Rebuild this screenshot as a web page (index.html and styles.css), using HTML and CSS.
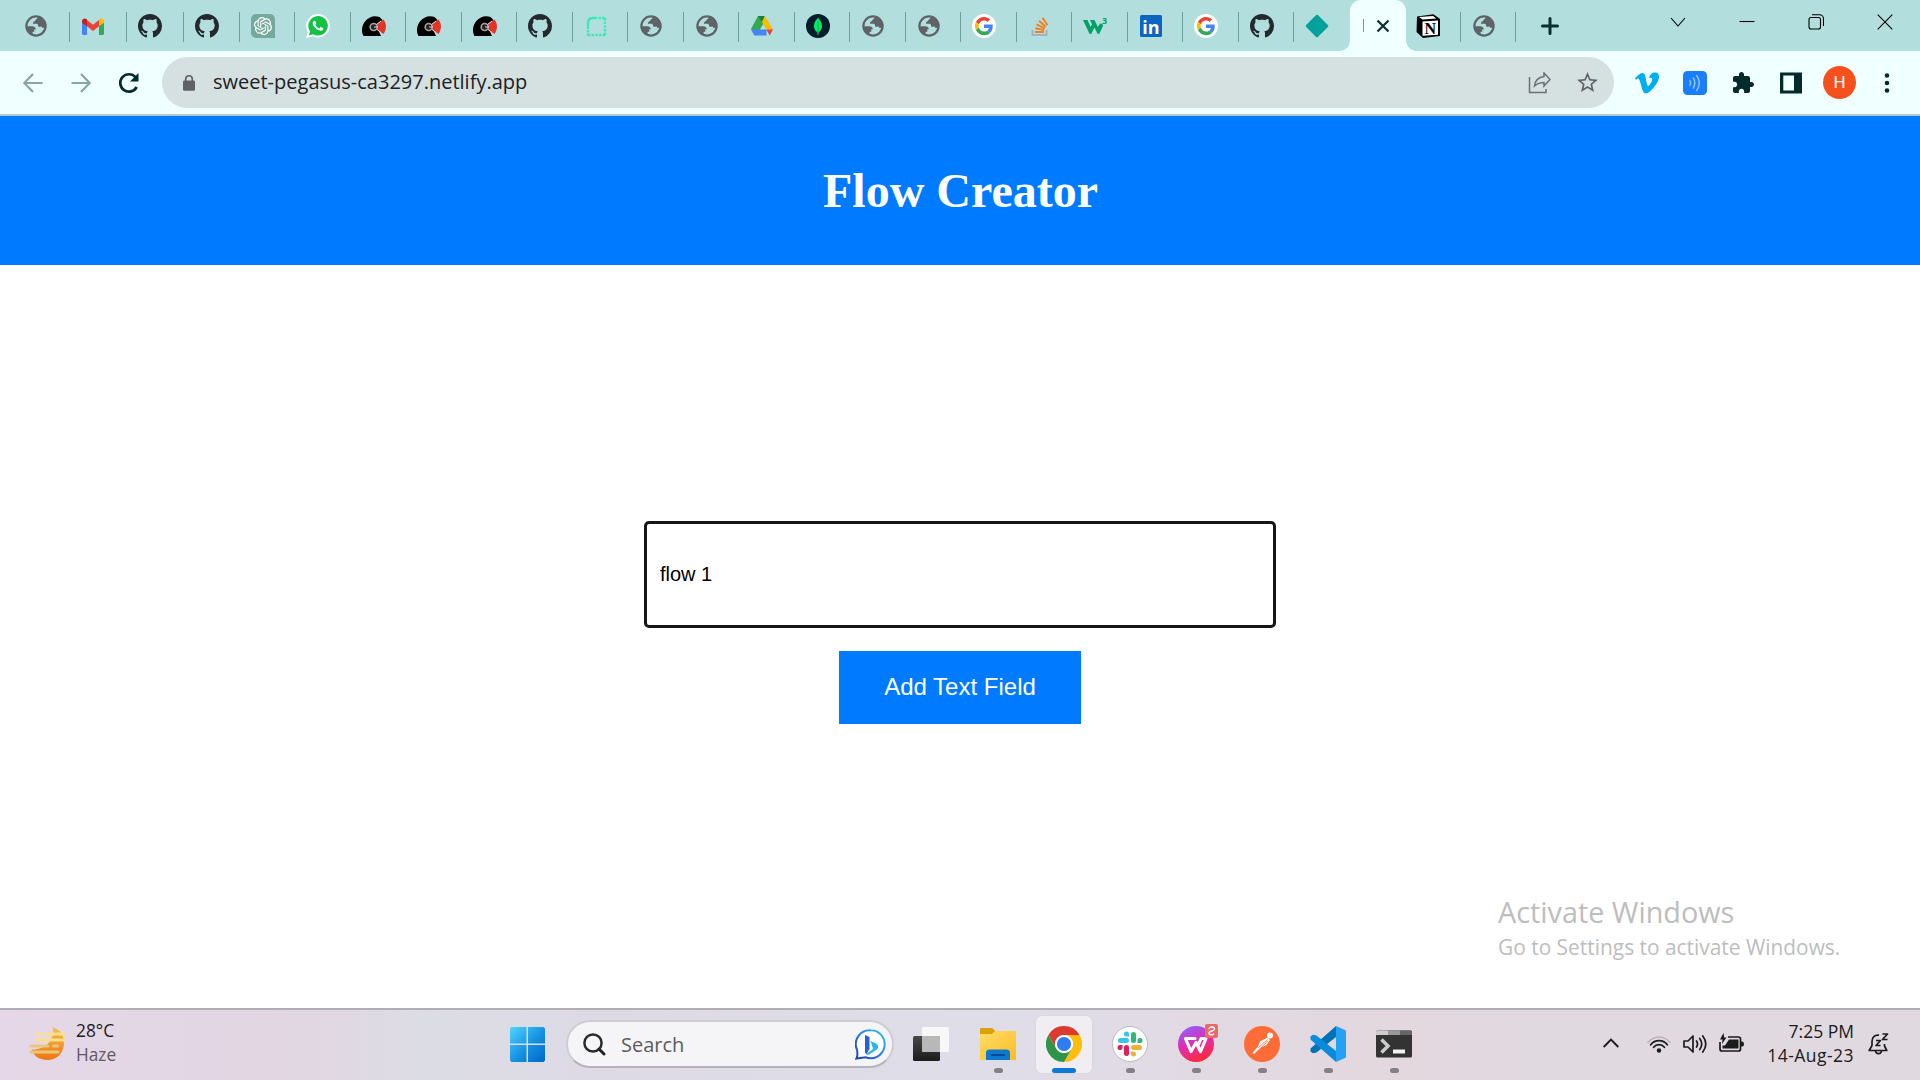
FILE: index.html
```html
<!DOCTYPE html>
<html lang="en">
<head>
<meta charset="utf-8">
<title>Flow Creator</title>
<link rel="stylesheet" href="styles.css">
</head>
<body>
<svg class="defs" aria-hidden="true">
  <defs>
    <linearGradient id="gWin" x1="0" y1="0" x2="1" y2="1"><stop offset="0" stop-color="#4fd5ff"/><stop offset=".55" stop-color="#1590e0"/><stop offset="1" stop-color="#0068c8"/></linearGradient>
    <linearGradient id="gMoon" x1="0" y1="0" x2="0" y2="1"><stop offset="0" stop-color="#f5bf52"/><stop offset="1" stop-color="#ee7512"/></linearGradient>
    <linearGradient id="gBing" x1="0" y1="1" x2="1" y2="0"><stop offset="0" stop-color="#1b3fae"/><stop offset=".5" stop-color="#2c7ee8"/><stop offset="1" stop-color="#2bc9ee"/></linearGradient>
    <linearGradient id="gFolder" x1="0" y1="0" x2="1" y2="1"><stop offset="0" stop-color="#ffdc6b"/><stop offset="1" stop-color="#fcbd22"/></linearGradient>
    <linearGradient id="gWps" x1=".2" y1="0" x2=".6" y2="1"><stop offset="0" stop-color="#8b62ff"/><stop offset=".5" stop-color="#e22bb0"/><stop offset="1" stop-color="#ff2a35"/></linearGradient>
    <linearGradient id="gDark" x1="0" y1="0" x2="0" y2="1"><stop offset="0" stop-color="#484848"/><stop offset="1" stop-color="#1c1c1c"/></linearGradient>
  </defs>
  <symbol id="globe" viewBox="0 0 24 24"><circle cx="12" cy="12" r="9.6" fill="none" stroke="#5f6368" stroke-width="2.3"/><path fill="#5f6368" d="M13 2.500c1 1 .5 2.200-.8 2.800-1 .5-.5 1.600-1.600 2-1.600.5-1.700 1.400-1.600 2.400h3.400c1.500 0 1.600 1 1.700 2.200.1 1.300 1.900.9 3 .7.700-.1.900.600 1 1.200l3.400.2C23 8 19 3 13 2.500z"/><path fill="#5f6368" d="M2.500 12.200h5.700c2.300.1 3.600 1.300 3.700 3.100h-1.600v2.500H8.800c-.5 1.100-.2 2.300.3 3.600C5 20.200 2.600 16.500 2.500 12.200z"/></symbol>
  <symbol id="github" viewBox="0 0 16 16"><path fill="#24292f" d="M8 0C3.58 0 0 3.58 0 8c0 3.54 2.29 6.53 5.47 7.59.4.07.55-.17.55-.38 0-.19-.01-.82-.01-1.49-2.01.37-2.53-.49-2.69-.94-.09-.23-.48-.94-.82-1.13-.28-.15-.68-.52-.01-.53.63-.01 1.08.58 1.23.82.72 1.21 1.87.87 2.33.66.07-.52.28-.87.51-1.07-1.78-.2-3.64-.89-3.64-3.95 0-.87.31-1.59.82-2.15-.08-.2-.36-1.02.08-2.12 0 0 .67-.21 2.2.82.64-.18 1.32-.27 2-.27s1.36.09 2 .27c1.53-1.04 2.2-.82 2.2-.82.44 1.1.16 1.92.08 2.12.51.56.82 1.27.82 2.15 0 3.07-1.87 3.75-3.65 3.95.29.25.54.73.54 1.48 0 1.07-.01 1.93-.01 2.2 0 .21.15.46.55.38A8.01 8.01 0 0 0 16 8c0-4.42-3.58-8-8-8z"/></symbol>
  <symbol id="helmet" viewBox="0 0 24 24"><path d="M1.500 22C-1.500 17 .2 11 3 7.500 6.500 3 12 1 17.500 3l3 3L14 11l5 11z"/><path fill="#e53427" d="M14 11L21.500 5.500c3.300 4.500 3.300 9.500 0 14.500l-7.500-5z"/><circle cx="11.700" cy="13" r="3.500" fill="#222" stroke="#a5a2a2" stroke-width="1.600"/><path stroke="#ddd" stroke-width="1" fill="none" d="M12 13h4M14.500 10.500L19 7M15 15.500l4 3"/></symbol>
  <symbol id="google" viewBox="0 0 24 24"><circle cx="12" cy="12" r="12" fill="#fff"/><g transform="translate(2.900 2.900) scale(.38)"><path fill="#EA4335" d="M24 9.500c3.540 0 6.710 1.220 9.210 3.600l6.850-6.850C35.900 2.380 30.470 0 24 0 14.620 0 6.510 5.380 2.560 13.220l7.980 6.190C12.430 13.720 17.740 9.500 24 9.500z"/><path fill="#4285F4" d="M46.980 24.550c0-1.570-.15-3.090-.38-4.550H24v9.020h12.940c-.58 2.960-2.260 5.480-4.780 7.180l7.730 6c4.510-4.180 7.090-10.360 7.090-17.650z"/><path fill="#FBBC05" d="M10.530 28.590c-.48-1.450-.76-2.990-.76-4.590s.27-3.140.76-4.590l-7.980-6.190C.92 16.460 0 20.120 0 24c0 3.880.92 7.540 2.560 10.780l7.970-6.190z"/><path fill="#34A853" d="M24 48c6.480 0 11.930-2.130 15.890-5.810l-7.730-6c-2.150 1.450-4.920 2.300-8.160 2.300-6.260 0-11.570-4.220-13.470-9.910l-7.980 6.190C6.510 42.620 14.620 48 24 48z"/></g></symbol>
</svg>

<header class="tabstrip">
  <div class="tab tab-first"><svg class="fav"><use href="#globe"/></svg></div>
  <div class="tab tab-wide"><svg class="fav" viewBox="0 0 24 24"><path fill="#4285f4" d="M1 7v12.500c0 .8.600 1.400 1.400 1.400H6V10z"/><path fill="#34a853" d="M23 7v12.500c0 .8-.6 1.400-1.400 1.400H18V10z"/><path fill="#ea4335" d="M6 6l6 4.700L18 6v6.200l-6 4.700-6-4.700z"/><path fill="#c5221f" d="M1 7.200C1 4.500 4 3.700 6 5.300v6.900L1 8.700z"/><path fill="#fbbc04" d="M23 7.200c0-2.700-3-3.500-5-1.900v6.900l5-3.500z"/></svg></div>
  <div class="tab tab-wide"><svg class="fav"><use href="#github"/></svg></div>
  <div class="tab"><svg class="fav"><use href="#github"/></svg></div>
  <div class="tab"><svg class="fav" viewBox="0 0 24 24"><path fill="#74aa9c" d="M5 0h14a5 5 0 0 1 5 5v19H5a5 5 0 0 1-5-5V5a5 5 0 0 1 5-5z"/><path transform="translate(3 3) scale(.75)" fill="#fff" d="M22.2819 9.8211a5.9847 5.9847 0 0 0-.5157-4.9108 6.0462 6.0462 0 0 0-6.5098-2.9A6.0651 6.0651 0 0 0 4.9807 4.1818a5.9847 5.9847 0 0 0-3.9977 2.9 6.0462 6.0462 0 0 0 .7427 7.0966 5.98 5.98 0 0 0 .511 4.9107 6.051 6.051 0 0 0 6.5146 2.9001A5.9847 5.9847 0 0 0 13.2599 24a6.0557 6.0557 0 0 0 5.7718-4.2058 5.9894 5.9894 0 0 0 3.9977-2.9001 6.0557 6.0557 0 0 0-.7475-7.0729zm-9.022 12.6081a4.4755 4.4755 0 0 1-2.8764-1.0408l.1419-.0804 4.7783-2.7582a.7948.7948 0 0 0 .3927-.6813v-6.7369l2.02 1.1686a.071.071 0 0 1 .038.052v5.5826a4.504 4.504 0 0 1-4.4945 4.4944zm-9.6607-4.1254a4.4708 4.4708 0 0 1-.5346-3.0137l.142.0852 4.783 2.7582a.7712.7712 0 0 0 .7806 0l5.8428-3.3685v2.3324a.0804.0804 0 0 1-.0332.0615L9.74 19.9502a4.4992 4.4992 0 0 1-6.1408-1.6464zM2.3408 7.8956a4.485 4.485 0 0 1 2.3655-1.9728V11.6a.7664.7664 0 0 0 .3879.6765l5.8144 3.3543-2.0201 1.1685a.0757.0757 0 0 1-.071 0l-4.8303-2.7865A4.504 4.504 0 0 1 2.3408 7.872zm16.5963 3.8558L13.1038 8.364 15.1192 7.2a.0757.0757 0 0 1 .071 0l4.8303 2.7913a4.4944 4.4944 0 0 1-.6765 8.1042v-5.6772a.79.79 0 0 0-.407-.667zm2.0107-3.0231l-.142-.0852-4.7735-2.7818a.7759.7759 0 0 0-.7854 0L9.409 9.2297V6.8974a.0662.0662 0 0 1 .0284-.0615l4.8303-2.7866a4.4992 4.4992 0 0 1 6.6802 4.66zM8.3065 12.863l-2.02-1.1638a.0804.0804 0 0 1-.038-.0567V6.0742a4.4992 4.4992 0 0 1 7.3757-3.4537l-.142.0805L8.704 5.459a.7948.7948 0 0 0-.3927.6813zm1.0976-2.3654l2.602-1.4998 2.6069 1.4998v2.9994l-2.5974 1.4997-2.6067-1.4997Z"/></svg></div>
  <div class="tab"><svg class="fav" viewBox="0 0 24 24"><path fill="#fff" d="M12 0a12 11.800 0 1 1-5.600 22.300L.2 24l1.700-6A11.900 11.900 0 0 1 12 0z"/><path fill="#12c245" d="M12 2a9.900 9.800 0 1 1-5 18.300L2.900 21.400 4 17.300A9.900 9.900 0 0 1 12 2z"/><path transform="translate(1.400 1.200) scale(.88)" fill="#fff" d="M17.472 14.382c-.297-.149-1.758-.867-2.03-.967-.273-.099-.471-.148-.67.15-.197.297-.767.966-.94 1.164-.173.199-.347.223-.644.075-.297-.15-1.255-.463-2.39-1.475-.883-.788-1.48-1.761-1.653-2.059-.173-.297-.018-.458.13-.606.134-.133.298-.347.446-.52.149-.174.198-.298.298-.497.099-.198.05-.371-.025-.52-.075-.149-.669-1.612-.916-2.207-.242-.579-.487-.5-.669-.51-.173-.008-.371-.01-.57-.01-.198 0-.52.074-.792.372-.272.297-1.040 1.016-1.040 2.479 0 1.462 1.065 2.875 1.213 3.074.149.198 2.096 3.200 5.077 4.487.709.306 1.262.489 1.694.625.712.227 1.360.195 1.871.118.571-.085 1.758-.719 2.006-1.413.248-.694.248-1.289.173-1.413-.074-.124-.272-.198-.57-.347z"/></svg></div>
  <div class="tab"><svg class="fav"><use href="#helmet"/></svg></div>
  <div class="tab"><svg class="fav"><use href="#helmet"/></svg></div>
  <div class="tab"><svg class="fav"><use href="#helmet"/></svg></div>
  <div class="tab"><svg class="fav"><use href="#github"/></svg></div>
  <div class="tab"><svg class="fav" viewBox="0 0 24 24"><g fill="none" stroke="#3be8b8" stroke-width="2.300"><path d="M4 15V9c0-3 2-5 5-5h4"/><path stroke-dasharray="2.400 1.300" d="M14.500 4H22M21 4v18M21 21H3M4 22v-7"/></g></svg></div>
  <div class="tab"><svg class="fav"><use href="#globe"/></svg></div>
  <div class="tab"><svg class="fav"><use href="#globe"/></svg></div>
  <div class="tab"><svg class="fav" viewBox="0 0 24 24"><path fill="#34a853" d="M8 2h5l2.500 4L6.500 21.500 1 15z"/><path fill="#188038" d="M8 2h7l-3.300 5.700z"/><path fill="#fbbc04" d="M12 7.700L15 2l8 13.500h-6.800z"/><path fill="#4285f4" d="M1 15.500h15.500v6H4.300z"/><path fill="#ea4335" d="M16.300 15.500H23l-3.300 6z"/></svg></div>
  <div class="tab"><svg class="fav" viewBox="0 0 24 24"><circle cx="12" cy="12" r="12" fill="#001e2b"/><path fill="#00ed64" d="M12 3.500c.8 1.800 4 4 4 8.500 0 3-1.500 5-3.500 6.600L12.300 21h-.7l-.2-2.400C9.500 17 8 15 8 12c0-4.500 3.200-6.700 4-8.500z"/><path stroke="#00a84c" d="M12 7v13"/></svg></div>
  <div class="tab"><svg class="fav"><use href="#globe"/></svg></div>
  <div class="tab"><svg class="fav"><use href="#globe"/></svg></div>
  <div class="tab"><svg class="fav"><use href="#google"/></svg></div>
  <div class="tab"><svg class="fav" viewBox="0 0 24 24"><path fill="none" stroke="#a9b2b4" stroke-width="2" d="M4.500 16v5h14v-5"/><g stroke="#f48024" stroke-width="2"><path d="M7 18h9M7.200 14.300l9 1.600M8.500 10.400l8.300 3.900M11 6.800l6.700 6M14.500 3.800l5 7.500"/></g></svg></div>
  <div class="tab"><svg class="fav" viewBox="0 0 24 24"><path fill="#04a068" d="M0 6h4.500l3.200 7L9 10.300 7 6h4.500l3.300 7L17 9.500l2.500.5L20 12l-3.800 8-1.700-.3-3-6.200L8.200 20H6.600z"/><text x="21.500" y="10" class="fav-three">3</text></svg></div>
  <div class="tab"><svg class="fav" viewBox="0 0 24 24"><rect x="1" y="1" width="22" height="22" rx="1.500" fill="#0a66c2"/><text x="12" y="19.500" class="fav-in">in</text></svg></div>
  <div class="tab"><svg class="fav"><use href="#google"/></svg></div>
  <div class="tab"><svg class="fav"><use href="#github"/></svg></div>
  <div class="tab tab-plain"><svg class="fav" viewBox="0 0 24 24"><path fill="#05a19c" stroke="#05a19c" stroke-width="2.500" stroke-linejoin="round" d="M12 2l10 10-10 10L2 12z"/></svg></div>
  <div class="tab tab-active"><i class="title-sliver"></i><svg width="14" height="14" viewBox="0 0 14 14"><path stroke="#08302f" stroke-width="2.200" d="M1.500 1.500l11 11M12.500 1.500l-11 11"/></svg></div>
  <div class="tab"><svg class="fav" viewBox="0 0 24 24"><path d="M1 2.500L17.500.3 24 5v17l-17 2L.5 18z"/><path fill="#fff" d="M3 3l14-1 3.500 2.500L6.500 5.500zM6.500 7.500L22 6.500v14.300l-15.500 1z"/><text x="14.300" y="19.500" class="fav-n">N</text></svg></div>
  <div class="tab"><svg class="fav"><use href="#globe"/></svg></div>
  <svg class="new-tab" viewBox="0 0 18 18"><path stroke="#08302f" stroke-width="3" stroke-linecap="round" d="M9 1.500v15M1.500 9h15"/></svg>
  <div class="window-controls">
    <svg viewBox="0 0 16 16"><path d="M1 4l7 8 7-8"/></svg>
    <svg viewBox="0 0 16 16"><path d="M.5 7.500h15"/></svg>
    <svg viewBox="0 0 16 16"><rect x="1" y="3.500" width="11.500" height="11.500" rx="2"/><path d="M4 .8h7.500a4 4 0 0 1 4 4V12"/></svg>
    <svg viewBox="0 0 16 16"><path d="M.7.7l14.600 14.600M15.300.7L.7 15.300"/></svg>
  </div>
</header>

<nav class="toolbar">
  <svg class="nav-icon nav-off" viewBox="0 0 20 20"><path d="M19.500 10H1.500M10 1L1.300 10l8.700 9"/></svg>
  <svg class="nav-icon nav-off" viewBox="0 0 20 20"><path d="M.5 10h18M10 1l8.700 9-8.700 9"/></svg>
  <svg class="nav-icon reload" viewBox="0 0 22 22"><path d="M18.700 15A8.700 8.700 0 1 1 17.500 5.200"/><path class="solid" d="M20.500 1v8.500H12z"/></svg>
  <div class="omnibox">
    <svg class="lock" viewBox="0 0 12 16"><rect y="5.500" width="12" height="10.300" rx="1.300" fill="#5f6368"/><path fill="none" stroke="#5f6368" stroke-width="1.700" d="M2.700 6V4a3.300 3.300 0 0 1 6.600 0v2"/></svg>
    <span class="url">sweet-pegasus-ca3297.netlify.app</span>
    <svg class="share" viewBox="0 0 24 22"><path d="M1.500 5v15.500H18V17"/><path d="M16 1l6 6.500-6 6.500v-3.500c-4 0-6.500.8-9.500 3.500.7-5.500 4-8.700 9.500-9.400z"/></svg>
    <svg class="star" viewBox="0 0 24 24"><path fill="#5f6368" d="M22 9.240l-7.190-.62L12 2 9.190 8.630 2 9.240l5.460 4.730L5.820 21 12 17.270 18.180 21l-1.630-7.030L22 9.240zM12 15.400l-3.760 2.270 1-4.280-3.320-2.880 4.380-.38L12 6.100l1.710 4.040 4.380.38-3.320 2.880 1 4.280L12 15.400z"/></svg>
  </div>
  <div class="extensions">
    <svg viewBox="0 0 24 24"><path fill="#00adef" d="M23.9765 6.4168c-.105 2.338-1.739 5.5429-4.894 9.6088-3.2679 4.247-6.0258 6.3699-8.2898 6.3699-1.409 0-2.578-1.294-3.553-3.881l-1.9179-7.1138c-.719-2.584-1.488-3.878-2.312-3.878-.179 0-.806.378-1.8809 1.132l-1.129-1.457a315.060 315.060 0 003.501-3.1279c1.579-1.368 2.765-2.085 3.5539-2.159 1.867-.18 3.016 1.100 3.447 3.838.465 2.953.789 4.789.971 5.5069.5389 2.450 1.1309 3.674 1.7759 3.674.502 0 1.256-.796 2.265-2.385 1.004-1.589 1.540-2.797 1.612-3.628.144-1.371-.395-2.061-1.614-2.061-.574 0-1.167.121-1.777.391 1.186-3.8679 3.434-5.7568 6.7619-5.6368 2.4729.06 3.6279 1.664 3.4929 4.7969z"/></svg>
    <svg viewBox="0 0 24 24"><rect width="24" height="24" rx="4.500" fill="#1a7cff"/><g fill="none" stroke="#8cc8ff" stroke-width="1.500" stroke-linecap="round"><path d="M7 9.500q1.300 2.500 0 5M10.300 7q3 5 0 10M13.700 4.500q5 7.500 0 15"/></g></svg>
    <svg viewBox="0 0 24 24"><path fill="#042b2b" d="M20.500 11H19V7c0-1.100-.9-2-2-2h-4V3.500C13 2.120 11.880 1 10.500 1S8 2.120 8 3.500V5H4c-1.100 0-1.990.9-1.990 2v3.800H3.500c1.490 0 2.700 1.210 2.700 2.700s-1.210 2.700-2.700 2.700H2V20c0 1.100.9 2 2 2h3.800v-1.500c0-1.490 1.210-2.700 2.700-2.700 1.490 0 2.700 1.210 2.700 2.700V22H17c1.100 0 2-.9 2-2v-4h1.500c1.380 0 2.500-1.120 2.500-2.500S21.880 11 20.500 11z"/></svg>
    <svg viewBox="0 0 24 24"><path fill="#042b2b" fill-rule="evenodd" d="M1 1.500h22v21H1zM4.300 4.500v15H15v-15z"/></svg>
    <span class="avatar">H</span>
    <svg class="kebab" viewBox="0 0 6 20"><g fill="#042b2b"><circle cx="3" cy="2.500" r="2.300"/><circle cx="3" cy="10" r="2.300"/><circle cx="3" cy="17.500" r="2.300"/></g></svg>
  </div>
</nav>

<main class="page">
  <div class="banner"><h1>Flow Creator</h1></div>
  <div class="flow">
    <input class="flow-input" type="text" value="flow 1">
    <button class="flow-add" type="button">Add Text Field</button>
  </div>
  <aside class="watermark"><p class="wm-title">Activate Windows</p><p class="wm-text">Go to Settings to activate Windows.</p></aside>
</main>

<footer class="taskbar">
  <div class="weather">
    <svg width="38" height="34" viewBox="0 0 38 34"><path fill="url(#gMoon)" d="M23.500 0C32 3 36 10 34.800 18.500 33.500 27.500 27 33 18.500 33 11 33 5 29.500 2.500 22.500 16 23 27 13 23.500 0z"/><g stroke-width="3.200" stroke-linecap="round"><path stroke="#fbe183" d="M8 7h4M18 7h17M8 13h27"/><path stroke="#eac778" d="M2 19h17M24.500 19h4M2 25h27"/></g></svg>
    <div class="stack"><span class="temp">28°C</span><span class="muted">Haze</span></div>
  </div>
  <div class="dock">
    <svg class="start" viewBox="0 0 35 35"><path fill="url(#gWin)" d="M1.500 0H16.500v16.500H0V1.500zM18 0h15.500L35 1.500v15H18zM0 18h16.500v17h-15L0 33.500zM18 18h17v15.500L33.500 35H18z"/></svg>
    <div class="search">
      <svg width="23" height="23" viewBox="0 0 23 23"><circle cx="10" cy="10" r="8.600" fill="none" stroke="#2b2b2b" stroke-width="2.500"/><path stroke="#222" stroke-width="3" stroke-linecap="round" d="M16 16l5 5"/></svg>
      <span class="search-label">Search</span>
      <svg class="bing" width="31" height="31" viewBox="0 0 31 31"><path fill="#fff" stroke="url(#gBing)" stroke-width="2" d="M16 1.200a14 14 0 1 1-5.500 27L1.500 29.500c1.500-2.500 1-5 .6-8.500A14 14 0 0 1 16 1.200z"/><path fill="#2362dc" d="M10 6l4.500 2v12L11.500 25c-.9-.3-1.500-1-1.500-2z"/><path fill="#25b9ee" d="M15.500 12l5 2.200c3.500 1.600 3.500 5 .7 6.900l-7 4.500c-1.500.8-2.500.4-3-.7l7-5z"/></svg>
    </div>
    <svg class="task-view" viewBox="0 0 36 36"><rect y="9" width="27" height="25" rx="1.500" fill="url(#gDark)"/><rect x="9" y="0" width="27" height="25" rx="1.500" fill="#f8f8f8"/><path fill="#b8b8b8" d="M9 9h18v16H10.500L9 23.500z"/></svg>
    <div class="app"><svg viewBox="0 0 36 36"><path fill="#dea103" d="M0 3.500C0 2.500.6 2 1.500 2H12l3 2.500V9H0z"/><path fill="url(#gFolder)" d="M0 8h12l3-3h20q1 0 1 1v27q0 1-1 1H1q-1 0-1-1z"/><path fill="#0c78cf" d="M6 34v-7q0-3.500 3.500-3.500h17q3.500 0 3.500 3.500v7z"/><path stroke="#07458d" stroke-width="1.800" d="M11 29h14"/></svg></div>
    <div class="app app-on"><svg viewBox="0 0 36 36"><path fill="#db3b2e" d="M18 0a18 18 0 0 1 15.600 9H18a9 9 0 0 0-7.800 13.500L2.400 9A18 18 0 0 1 18 0z"/><path fill="#fdbd0d" d="M33.600 9A18 18 0 0 1 18 36l7.800-13.500A9 9 0 0 0 18 9z"/><path fill="#2f9448" d="M18 36A18 18 0 0 1 2.400 9l7.800 13.500A9 9 0 0 0 25.800 22.500z"/><circle cx="18" cy="18" r="9" fill="#fff"/><circle cx="18" cy="18" r="7.100" fill="#2e7cf0"/></svg></div>
    <div class="app"><svg viewBox="0 0 36 36"><circle cx="18" cy="18" r="17.500" fill="#fff" stroke="#bdb9c1"/><g stroke-width="5" stroke-linecap="round"><path stroke="#36c5f0" d="M8.500 14.500h6"/><path stroke="#2eb67d" d="M21.500 8.500v6"/><path stroke="#ecb22e" d="M21.500 21.500h6"/><path stroke="#e01e5a" d="M14.500 21.500v6"/></g><path fill="#36c5f0" d="M17 10.500h-2.500a2.500 2.500 0 1 1 2.500-2.500z"/><path fill="#2eb67d" d="M25.500 17v-2.500a2.500 2.500 0 1 1 2.500 2.500z"/><path fill="#ecb22e" d="M19 25.500h2.500a2.500 2.500 0 1 1-2.500 2.500z"/><path fill="#e01e5a" d="M10.500 19v2.500A2.500 2.500 0 1 1 8 19z"/></svg></div>
    <div class="app"><svg viewBox="0 0 36 36"><circle cx="18" cy="18" r="18" fill="url(#gWps)"/><path fill="none" stroke="#fff" stroke-width="3.200" stroke-linejoin="round" stroke-linecap="round" d="M17 12.500H7.500L13 25.500l5-9 4.500 9L28 12.500h-5l-2.500 6"/></svg><span class="badge"><svg viewBox="0 0 13 14"><rect width="13" height="14" rx="2" fill="#ea6a6a"/><path fill="none" stroke="#fff" stroke-width="1.400" stroke-linecap="round" d="M4 4.500C5 2.500 9.500 2.500 9.500 5S4 6.500 4 9s4 2 4.500 1"/></svg></span></div>
    <div class="app"><svg viewBox="0 0 36 36"><circle cx="18" cy="18" r="18" fill="#ff6c37"/><circle cx="26" cy="9.500" r="3" fill="#fff"/><path fill="#fff" d="M23.500 11.500l2.500 2.500-3.500 5-5.500 2.500-7 6.500-1.500-1 5.500-6.500 2-5z"/><path stroke="#ff6c37" stroke-width=".8" d="M14.500 21.500l9-8M17 22l6.500-7"/></svg></div>
    <div class="app"><svg viewBox="0 0 36 36"><path fill="#0072b8" d="M26 0v11L6.500 26.500 3 27.300.5 25.500v-3z"/><path fill="#0a8bdb" d="M.5 13.500V10.500L3 8.800l3.500.8L26 25v11z"/><path fill="#23a1f4" d="M26 0l9 4q1 .5 1 1.500v25q0 1-1 1.500l-9 4z"/></svg></div>
    <div class="app"><svg viewBox="0 0 36 36"><rect y="4.500" width="36" height="27" rx="1.500" fill="#333"/><path fill="#ccc" d="M0 9V6q0-1.500 1.500-1.500H12V9z"/><path fill="#999" d="M12 4.500h12V9H12z"/><path fill="#666" d="M24 4.500h10.500Q36 4.500 36 6v3H24z"/><path fill="none" stroke="#ccc" stroke-width="3.500" d="M5.500 13.500l6.500 6.500-6.500 6.500"/><rect x="17" y="23.500" width="12" height="4" fill="#f2f2f2"/></svg></div>
  </div>
  <div class="tray">
    <svg class="chev" viewBox="0 0 16 10"><path fill="none" stroke="#1b1b1b" stroke-width="1.900" d="M.7 9L8 1.700 15.300 9"/></svg>
    <svg width="24" height="18" viewBox="0 0 24 18"><g fill="none" stroke="#1b1b1b" stroke-width="1.800" stroke-linecap="round"><path stroke="#b7adb5" stroke-width="1.400" d="M1 7.500a14 14 0 0 1 22 0"/><path d="M3.700 9.700a10.600 10.600 0 0 1 16.600 0M6.600 12.200a7 7 0 0 1 10.800 0"/></g><circle cx="12" cy="15.500" r="2.200" fill="#1b1b1b"/></svg>
    <svg class="speaker" width="25" height="20" viewBox="0 0 25 20"><g fill="none" stroke="#1b1b1b" stroke-width="1.700" stroke-linejoin="round" stroke-linecap="round"><path d="M1 7h4l5-5v16l-5-5H1zM13.500 7q2 3 0 6M16.700 4.500q4 5.500 0 11M19.800 2q6 8 0 16"/></g></svg>
    <svg class="battery" width="25" height="20" viewBox="0 0 25 20"><path fill="none" stroke="#1b1b1b" stroke-width="1.700" d="M9 4h10.500q2 0 2 2v10q0 2-2 2H3q-2 0-2-2V9"/><path d="M10 6.500h9.500v9H3.500v-3H6z" fill="#1b1b1b"/><path fill="#1b1b1b" d="M21.500 8.500h1.800q1.700 0 1.700 2.500t-1.700 2.500h-1.800zM4.500 0L1 6.500h2.500L3 11l4.500-6.500H5.200z"/></svg>
    <div class="stack clock"><span class="time">7:25 PM</span><span class="date">14-Aug-23</span></div>
    <svg class="bell" width="21" height="22" viewBox="0 0 21 22"><g fill="none" stroke="#1b1b1b" stroke-width="1.700" stroke-linejoin="round"><path d="M11 2.200C6.500 1.500 4 4.500 4 8.500v4L1.200 17.500h17.600L16.500 13v-2M7.500 18c.5 3.500 5.500 3.500 6 0M8 7.500h4.500L8 12.500h4.500"/><path d="M14.500 1h5l-5 5.500h5"/></g></svg>
  </div>
</footer>
</body>
</html>
```
FILE: styles.css
```css
* { box-sizing: border-box; }
body {
  margin: 0;
  width: 1920px;
  height: 1080px;
  overflow: hidden;
  display: grid;
  grid-template-rows: 51px 65px 1fr 72px;
  font-family: "Open Sans", "Noto Sans", sans-serif;
  background: #fff;
}
svg { display: block; flex: none; }
.defs { position: absolute; width: 0; height: 0; }

/* Tab strip */
.tabstrip { display: flex; background: #b2dfdd; }
.tab {
  width: 55.5px;
  flex: none;
  display: flex;
  align-items: center;
  padding-left: 10.700px;
  background: linear-gradient(#6d9f9b, #6d9f9b) right 12px / 1.4px 30px no-repeat;
}
.tab-first { width: 58px; margin-left: 12.500px; padding-left: 11.500px; }
.tab-wide { width: 57px; }
.tab-plain, .tab-active { background-image: none; }
.fav { width: 24px; height: 24px; margin-top: 1px; }
.fav-three { font: 700 9px "Open Sans", sans-serif; fill: #04a068; text-anchor: middle; }
.fav-in { font: 700 18px "Open Sans", sans-serif; fill: #fff; text-anchor: middle; }
.fav-n { font: 700 16px "Liberation Serif", serif; fill: #000; text-anchor: middle; }
.tab-active {
  position: relative;
  width: 56px;
  margin-left: -.500px;
  padding-left: 13px;
  gap: 12px;
  background: #f0ffff;
  border-radius: 11px 11px 0 0;
}
.tab-active::before, .tab-active::after {
  content: "";
  position: absolute;
  bottom: 0;
  width: 10px;
  height: 10px;
}
.tab-active::before { left: -10px; background: radial-gradient(circle at 0 0, transparent 9.500px, #f0ffff 10px); }
.tab-active::after { right: -10px; background: radial-gradient(circle at 100% 0, transparent 9.500px, #f0ffff 10px); }
.title-sliver { width: 1px; height: 13px; background: #7b9493; }
.new-tab { width: 18px; height: 18px; margin: 17px 0 0 24px; }
.window-controls { display: flex; gap: 53px; margin: 14px 27px 0 auto; }
.window-controls svg { width: 16px; height: 16px; fill: none; stroke: #000; stroke-width: 1.1; }

/* Toolbar */
.toolbar {
  display: flex;
  align-items: center;
  padding: 0 30px 0 23px;
  background: #f0ffff;
  border-bottom: 2px solid #b1c9c8;
}
.nav-icon { width: 20px; height: 20px; fill: none; stroke: #042b2b; stroke-width: 2.2; margin-right: 28px; }
.nav-off { stroke: #8aa5a3; }
.reload { width: 22px; height: 22px; stroke-width: 2.7; margin: 0 22px 0 -1px; }
.solid { fill: #042b2b; stroke: none; }
.omnibox {
  width: 1452px;
  height: 51px;
  display: flex;
  align-items: center;
  padding: 0 14px 0 21px;
  border-radius: 26px;
  background: #d5e0e0;
}
.lock { width: 12px; height: 16px; }
.url { margin: -2px 0 0 18px; font-size: 20px; line-height: 26px; color: #202124; }
.share { width: 24px; height: 22px; margin-left: auto; fill: none; stroke: #6b7074; stroke-width: 1.500; }
.star { width: 25px; height: 25px; margin-left: 23px; }
.extensions { display: flex; align-items: center; flex: 1; gap: 24px; margin-left: 21px; }
.extensions svg { width: 24px; height: 24px; }
.avatar {
  width: 33px;
  height: 33px;
  margin-left: -4px;
  border-radius: 50%;
  background: #f6511d;
  color: #fff;
  font: 17px/33px Roboto, sans-serif;
  text-align: center;
}
.extensions .kebab { width: 6px; height: 20px; margin-left: auto; }

/* Page */
.page { position: relative; }
.banner { height: 149px; background: #007bff; display: grid; place-items: center; }
.banner h1 { margin: 1px 0 0 1px; font: 700 48px/56px "Liberation Serif", serif; color: #fff; }
.flow { display: flex; flex-direction: column; align-items: center; padding-top: 256px; gap: 23px; }
.flow-input {
  width: 632px;
  height: 107px;
  padding: 0 13px;
  border: 3px solid #161616;
  border-radius: 5px;
  outline: 0;
  font: 20px "Liberation Sans", sans-serif;
  color: #000;
}
.flow-add {
  width: 242px;
  height: 73px;
  padding: 0 0 2px;
  border: 0;
  background: #007bff;
  color: #fff;
  font: 24px "Liberation Sans", sans-serif;
}
.watermark { position: absolute; left: 1498px; top: 776px; color: #bdbdbd; white-space: nowrap; }
.watermark p { margin: 0; }
.wm-title { font-size: 28.800px; line-height: 40px; }
.wm-text { font-size: 20.900px; line-height: 30px; }

/* Taskbar */
.taskbar {
  display: flex;
  align-items: stretch;
  border-top: 2px solid #b1adb5;
  background: linear-gradient(90deg, #e5d7e7 0, #e2d6e3 290px, #dcdce4 420px, #dddae5 600px, #dedde8 980px, #e4d7de 1400px, #e1d9e0 1520px, #e1d9e0 100%);
  color: #1b1b1b;
}
.stack { display: flex; flex-direction: column; font-size: 17.300px; line-height: 24px; }
.weather { flex: none; width: 510px; display: flex; padding: 17px 0 0 29px; gap: 9px; }
.weather .stack { margin-top: -8px; }
.muted { color: #605a62; }
.dock { display: flex; flex: none; }
.start { width: 35px; height: 35px; margin-top: 17px; }
.search {
  flex: none;
  width: 328px;
  height: 48px;
  margin: 10px 0 0 21px;
  padding: 0 6px 0 15px;
  display: flex;
  align-items: center;
  border: 2px solid #cfccd6;
  border-bottom-color: #b6b3bd;
  border-radius: 24px;
  background: #f5f5f8;
}
.search-label { margin-left: 15px; font-size: 20px; color: #5c5c5c; }
.bing { margin-left: auto; }
.task-view { width: 36px; height: 36px; margin: 17px 22px 0 19px; }
.app {
  position: relative;
  flex: none;
  width: 56px;
  height: 57px;
  margin: 6px 10px 0 -1px;
  padding: 10px;
  border-radius: 6px;
}
.app + .app { margin-left: 0; }
.app > svg { width: 36px; height: 36px; }
.app::after {
  content: "";
  position: absolute;
  left: 24px;
  bottom: 0;
  width: 9px;
  height: 5px;
  border-radius: 3px;
  background: #858087;
}
.app-on { background: #f0eef3; box-shadow: 0 0 0 1px #dbd8e0; }
.app-on::after { left: 16px; width: 24px; background: #0b7ad8; }
.badge { position: absolute; left: 37px; top: 8px; }
.badge svg { width: 13px; height: 14px; }
.tray { display: flex; align-items: flex-start; margin-left: auto; padding-right: 31px; }
.tray > svg { margin-top: 25px; }
.tray > .chev { width: 16px; height: 10px; margin: 28px 28px 0 0; }
.tray > .speaker { margin: 24px 0 0 12px; }
.tray > .battery { margin: 23px 0 0 11px; }
.clock { width: 110px; margin-top: 9px; font-size: 17.500px; text-align: right; }
.date { letter-spacing: .45px; }
.tray > .bell { margin: 23px 0 0 14px; }
```
